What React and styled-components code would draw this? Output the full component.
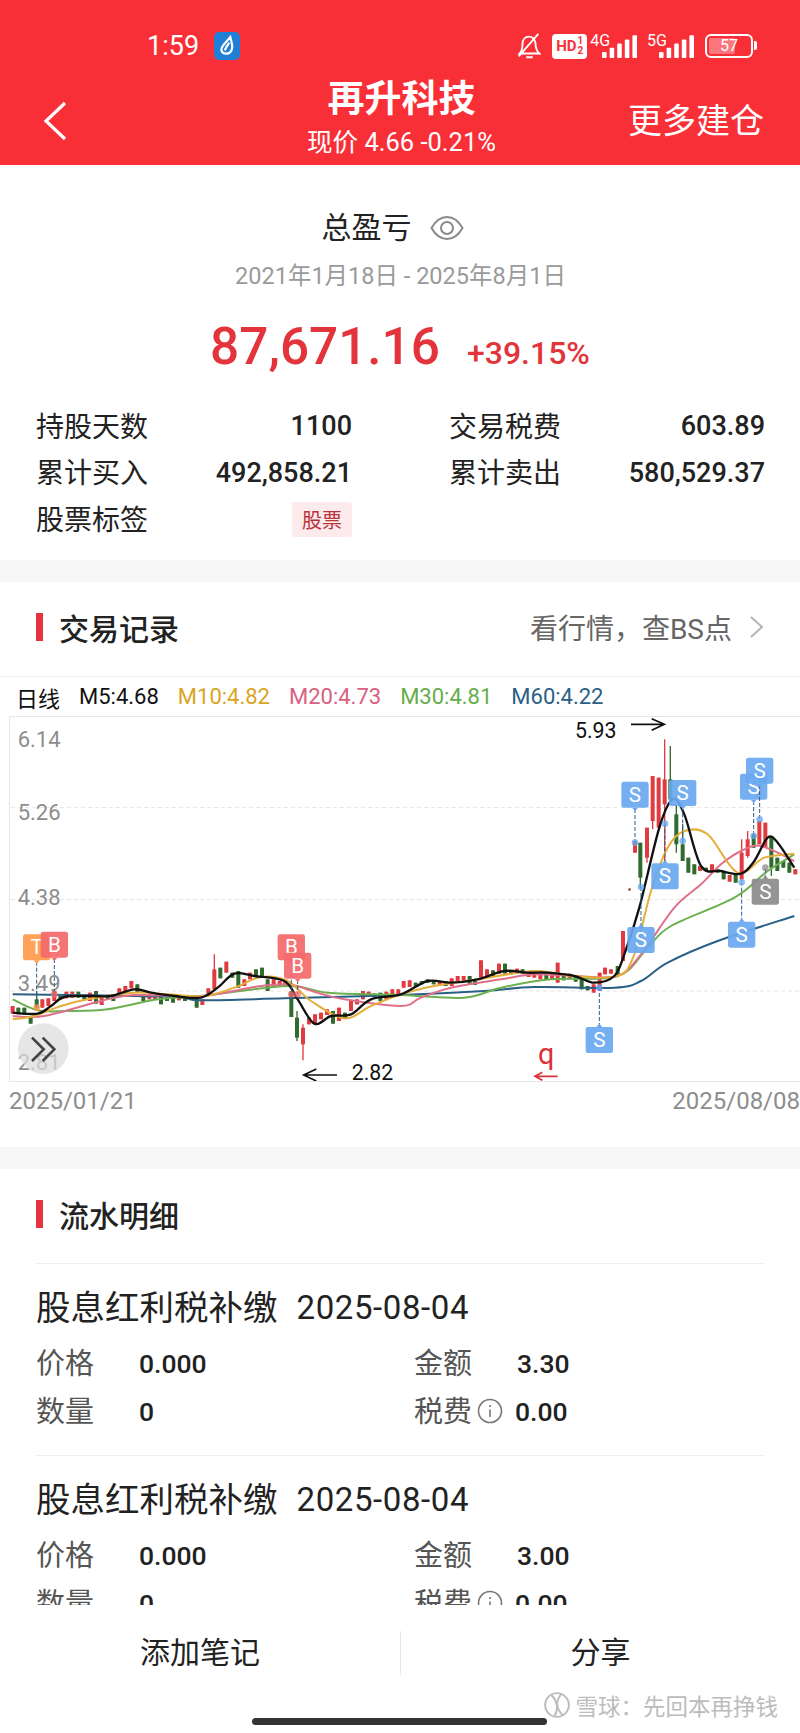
import styled, { createGlobalStyle } from 'styled-components';

const GlobalStyle = createGlobalStyle`
    * { box-sizing: border-box; }
    html, body { margin: 0; padding: 0; background: #fff; }
    body { font-family: Roboto, "Noto Sans CJK SC", sans-serif; }
`;

const R = '#e23b3f';
const G = '#2f6b2c';

// chart values are read in units of 1/3 px, right half shifted by 1200
const leftCandles = [
    [35, 1005, 1028, R], [52, 1010, 1030, G], [70, 1010, 1030, G], [89, 1040, 1058, G], [107, 960, 1018, G, 985, 1010],
    [124, 985, 1010, R], [142, 982, 1005, R], [160, 960, 990, R], [178, 975, 985, G], [196, 962, 982, R], [214, 962, 980, R],
    [232, 962, 980, G], [250, 972, 985, G], [267, 965, 990, R], [285, 960, 998, G], [302, 980, 1002, R], [320, 975, 985, G],
    [337, 970, 990, G], [355, 952, 975, R], [373, 945, 965, R], [391, 930, 952, R], [409, 940, 965, G], [427, 970, 990, G],
    [445, 970, 985, R], [462, 972, 985, R], [480, 975, 1000, G], [498, 980, 990, G], [516, 980, 995, G], [534, 978, 988, R],
    [552, 978, 990, G], [587, 980, 1010, G], [604, 985, 1002, R], [622, 952, 970, R], [640, 850, 955, R, 895, 955],
    [658, 890, 922, G], [676, 872, 905, R], [694, 905, 920, G], [712, 900, 950, G], [730, 925, 945, R], [747, 905, 925, R],
    [765, 895, 915, G], [783, 890, 920, G], [800, 925, 960, G], [818, 925, 945, R], [836, 930, 945, R], [853, 930, 945, R],
    [871, 960, 1038, G], [888, 1020, 1110, G, 1040, 1100], [906, 1060, 1168, R, 1070, 1120], [924, 1040, 1060, R],
    [942, 1030, 1058, R], [960, 1025, 1045, R], [978, 1015, 1032, R], [996, 1020, 1058, G], [1014, 1010, 1050, R],
    [1032, 1025, 1042, G], [1050, 990, 1020, R], [1068, 985, 1000, R], [1086, 960, 985, R], [1103, 962, 975, R],
    [1121, 968, 980, G], [1138, 965, 990, G], [1156, 962, 985, R], [1174, 955, 975, R], [1192, 955, 970, R],
];

const rightCandles = [
    [8, 930, 950, R], [26, 928, 948, R], [44, 935, 945, G], [62, 930, 940, G], [80, 925, 935, G], [98, 930, 940, G],
    [116, 930, 945, R], [134, 930, 945, G], [152, 922, 945, R], [170, 915, 930, R], [188, 915, 930, R], [206, 915, 940, G],
    [222, 930, 942, G], [240, 868, 920, R], [258, 895, 915, R], [276, 898, 915, G], [294, 878, 908, R], [312, 878, 908, G],
    [330, 898, 910, G], [348, 893, 908, R], [365, 895, 908, G], [383, 900, 918, R], [400, 905, 920, R], [418, 912, 925, R],
    [436, 905, 925, G], [453, 905, 925, R], [470, 875, 935, R], [488, 908, 928, G], [506, 908, 925, R], [524, 915, 932, G],
    [542, 922, 955, G], [560, 945, 958, G], [578, 940, 965, R], [596, 905, 960, R], [612, 890, 910, R], [630, 895, 908, R],
    [650, 885, 915, G], [666, 780, 870, R], [702, 510, 545, R], [718, 515, 650, G, 515, 620], [738, 470, 575, R, 470, 560],
    [755, 315, 475, R, 315, 450], [773, 320, 470, R], [791, 205, 570, R, 325, 400], [808, 225, 400, G, 325, 385],
    [826, 400, 545, G, 430, 520], [845, 460, 570, G, 520, 570], [862, 560, 605, G], [880, 580, 610, G], [897, 585, 600, R],
    [915, 590, 600, G], [933, 580, 605, R], [950, 595, 605, G], [968, 600, 625, G], [986, 612, 632, R], [1004, 610, 635, G],
    [1022, 505, 630, R, 545, 625], [1040, 480, 560, R, 505, 555], [1058, 490, 530, G], [1075, 450, 520, R], [1093, 455, 530, R],
    [1111, 495, 615, G, 495, 590], [1129, 560, 600, G], [1147, 570, 590, G], [1165, 575, 605, G], [1183, 595, 610, R],
];

const candles = [...leftCandles, ...rightCandles.map(c => [c[0] + 1200, ...c.slice(1)])];

const shift = pts => pts.map(([x, y]) => [x + 1200, y]);

const lines = [
    {
        color: '#2a5f86',
        pts: [[35, 970], [200, 972], [520, 978], [600, 988], [850, 982], [1200, 972],
            ...shift([[250, 960], [400, 948], [640, 950], [720, 930], [800, 875], [950, 810], [1180, 735]])],
    },
    {
        color: '#6cb04f',
        pts: [[35, 985], [110, 1018], [200, 1020], [320, 1015], [470, 985], [600, 975], [860, 945], [980, 965], [1200, 972],
            ...shift([[190, 980], [300, 950], [450, 925], [650, 915], [740, 830], [810, 765], [1000, 680], [1100, 600], [1180, 550]])],
    },
    {
        color: '#e0708a',
        pts: [[35, 1035], [130, 1035], [300, 990], [400, 972], [600, 975], [760, 948], [860, 940], [950, 965], [1030, 985], [1200, 1005],
            ...shift([[60, 980], [150, 950], [300, 925], [400, 910], [520, 915], [650, 915], [720, 850], [820, 710], [900, 640], [960, 580], [1020, 540], [1080, 525], [1180, 570]])],
    },
    {
        color: '#e5ad3a',
        pts: [[35, 1045], [100, 1035], [180, 1005], [260, 985], [400, 965], [500, 970], [610, 975], [700, 950], [780, 918], [860, 930], [930, 990], [1030, 1042], [1110, 1005], [1200, 970],
            ...shift([[100, 945], [230, 925], [400, 900], [520, 915], [650, 915], [700, 850], [750, 660], [800, 530], [850, 480], [920, 490], [1010, 605], [1090, 560], [1180, 548]])],
    },
    {
        color: '#111',
        pts: [[35, 1025], [110, 1028], [150, 1005], [190, 978], [270, 975], [330, 975], [400, 955], [450, 965], [520, 975], [600, 980], [650, 950], [700, 908], [760, 915], [850, 930], [890, 985], [940, 1058], [990, 1035], [1050, 1030], [1110, 985], [1200, 970],
            ...shift([[80, 930], [150, 935], [230, 925], [310, 900], [380, 905], [440, 905], [520, 915], [580, 935], [640, 915], [670, 850], [715, 710], [775, 470], [815, 385], [850, 430], [900, 585], [960, 600], [1020, 608], [1060, 570], [1100, 500], [1130, 515], [1180, 590]])],
    },
];

// marker: letter, centre x, box top, where its dashed stem ends, colour
const markers = [
    ['T', 107, 790, 1010, '#ff9a4a'],
    ['B', 160, 782, 970, '#f4696b'],
    ['B', 871, 790, 970, '#f4696b'],
    ['B', 890, 845, 970, '#f4696b'],
    ['S', 1902, 332, 515, '#69a8f0'],
    ['S', 2045, 327, 510, '#69a8f0'],
    ['S', 1992, 577, 458, '#69a8f0'],
    ['S', 1920, 768, 648, '#69a8f0'],
    ['S', 1795, 1068, 950, '#69a8f0'],
    ['S', 2222, 752, 634, '#69a8f0'],
    ['S', 2258, 308, 495, '#69a8f0'],
    ['S', 2276, 260, 445, '#69a8f0'],
    ['S', 2293, 623, 590, '#8b8b8b'],
];

// catmull-rom through the points
const smooth = pts => {
    let d = `M${pts[0][0]} ${pts[0][1]}`;
    for (let i = 0; i < pts.length - 1; i++) {
        const p0 = pts[i - 1] || pts[i];
        const p1 = pts[i];
        const p2 = pts[i + 1];
        const p3 = pts[i + 2] || p2;
        const c1x = p1[0] + (p2[0] - p0[0]) / 6;
        const c1y = p1[1] + (p2[1] - p0[1]) / 6;
        const c2x = p2[0] - (p3[0] - p1[0]) / 6;
        const c2y = p2[1] - (p3[1] - p1[1]) / 6;
        d += ` C${c1x} ${c1y} ${c2x} ${c2y} ${p2[0]} ${p2[1]}`;
    }
    return d;
};

function KChart() {
    return (
        <svg width="791" height="365" viewBox="27 138 2373 1095" style={{ display: 'block' }}>
            {[410, 686, 960].map(y => (
                <line key={y} x1="30" x2="2400" y1={y} y2={y} stroke="#e4e4e4" strokeWidth="3" strokeDasharray="12 9" />
            ))}
            <g fontFamily="Roboto, sans-serif" fontSize="66" fill="#8d8d8d">
                <text x="50" y="229">6.14</text>
                <text x="50" y="448">5.26</text>
                <text x="50" y="703">4.38</text>
                <text x="50" y="961">3.49</text>
                <text x="50" y="1198">2.81</text>
            </g>
            {candles.map(([x, top, bottom, color, bodyTop = top, bodyBottom = bottom], i) => (
                <g key={i}>
                    <line x1={x} x2={x} y1={top} y2={bottom} stroke={color} strokeWidth="4" />
                    <rect x={x - 6} y={bodyTop} width="12" height={bodyBottom - bodyTop} fill={color} />
                </g>
            ))}
            <rect x="1882" y="652" width="7" height="7" fill="#a52a3a" />
            {lines.map(l => (
                <path key={l.color} d={smooth(l.pts)} fill="none" stroke={l.color} strokeWidth={l.color === '#111' ? 7 : 6} />
            ))}
            {markers.map(([letter, x, top, end, color], i) => {
                const below = end > top;
                const stemFrom = below ? top + 82 : top;
                return (
                    <g key={i}>
                        <line x1={x} x2={x} y1={stemFrom} y2={end} stroke="#2a5f86" strokeWidth="3" strokeDasharray="12 6" />
                        <circle cx={x} cy={end} r="10" fill={color} opacity=".75" />
                        <rect x={x - 41} y={top} width="82" height="78" rx="7" fill={color} opacity=".92" />
                        <path d={below ? `M${x - 9} ${top + 78} L${x} ${top + 88} L${x + 9} ${top + 78}Z` : `M${x - 9} ${top} L${x} ${top - 10} L${x + 9} ${top}Z`} fill={color} />
                        <text x={x} y={top + 60} textAnchor="middle" fontFamily="Roboto, sans-serif" fontSize="62" fill="#fff">{letter}</text>
                    </g>
                );
            })}
            <g fontFamily="Roboto, sans-serif" fontSize="64" fill="#111">
                <text x="1722" y="202">5.93</text>
                <text x="1052" y="1227">2.82</text>
            </g>
            <path d="M1890 160H1990M1952 143L1990 160L1952 178" fill="none" stroke="#111" strokeWidth="5" />
            <path d="M1008 1212H908M946 1194L908 1212L946 1230" fill="none" stroke="#111" strokeWidth="5" />
            <text x="1611" y="1178" fontFamily="Roboto, sans-serif" fontSize="86" fill="#d8343a">q</text>
            <path d="M1670 1216H1602M1624 1204L1602 1216L1624 1228" fill="none" stroke="#d8343a" strokeWidth="5" />
            <circle cx="127" cy="1133" r="76" fill="#dcdcdc" opacity=".72" />
            <path d="M93 1100L128 1135L93 1170M125 1100L160 1135L125 1170" fill="none" stroke="#444" strokeWidth="8" />
        </svg>
    );
}

function Signal() {
    return (
        <svg width="36" height="23" viewBox="0 0 36 23">
            {[0, 1, 2, 3, 4].map(i => (
                <rect key={i} x={i * 7.6} y={17 - i * 4.2} width="4.6" height={6 + i * 4.2} rx="1" fill="#fff" />
            ))}
        </svg>
    );
}

const flows = [
    { title: '股息红利税补缴', date: '2025-08-04', price: '0.000', amount: '3.30', qty: '0', tax: '0.00' },
    { title: '股息红利税补缴', date: '2025-08-04', price: '0.000', amount: '3.00', qty: '0', tax: '0.00' },
];

export default function App() {
    return (
        <Page>
            <GlobalStyle />
            <Header>
                <StatusBar>
                    <Clock>1:59</Clock>
                    <AppBadge>
                        <svg width="20" height="22" viewBox="0 0 18 20">
                            <path d="M12 2C13 7 15 10 13 14C11 18 5 18 4 14C3 10 9 6 12 2ZM7 14C8 11 10 9 11 7" fill="none" stroke="#fff" strokeWidth="2" />
                        </svg>
                    </AppBadge>
                    <StatusIcons>
                        <svg width="28" height="28" viewBox="0 0 28 30" fill="none" stroke="#fff" strokeWidth="2">
                            <path d="M4 23C7 20 7 17 7 13C7 8 10 5 14 5C18 5 20 8 21 12C21 17 22 20 25 23Z" />
                            <path d="M11 27H18M3 26L24 2" />
                        </svg>
                        <HdChip>
                            HD
                            <HdFraction><span>1</span><span>2</span></HdFraction>
                        </HdChip>
                        <NetGroup><NetLabel>4G</NetLabel><Signal /></NetGroup>
                        <NetGroup><NetLabel>5G</NetLabel><Signal /></NetGroup>
                        <Battery><BatteryFill /><BatteryText>57</BatteryText></Battery>
                    </StatusIcons>
                </StatusBar>
                <NavRow>
                    <BackIcon width="26" height="40" viewBox="0 0 26 40" fill="none" stroke="#fff" strokeWidth="3.2">
                        <path d="M23 2L4 20L23 38" />
                    </BackIcon>
                    <TitleBlock>
                        <Title>再升科技</Title>
                        <Subtitle>现价 4.66 -0.21%</Subtitle>
                    </TitleBlock>
                    <NavAction>更多建仓</NavAction>
                </NavRow>
            </Header>
            <Scroll>
                <Summary>
                    <SummaryHead>
                        总盈亏
                        <svg width="34" height="26" viewBox="0 0 34 26" fill="none" stroke="#8a8a8a" strokeWidth="2">
                            <path d="M1.5 13C6 5 11 2 17 2C23 2 28 5 32.5 13C28 21 23 24 17 24C11 24 6 21 1.5 13Z" />
                            <circle cx="17" cy="13" r="6" />
                        </svg>
                    </SummaryHead>
                    <DateRange>2021年1月18日 - 2025年8月1日</DateRange>
                    <Profit>
                        <ProfitValue>87,671.16</ProfitValue>
                        <ProfitRate>+39.15%</ProfitRate>
                    </Profit>
                    <StatGrid>
                        <Stat><StatLabel>持股天数</StatLabel><StatValue>1100</StatValue></Stat>
                        <Stat><StatLabel>交易税费</StatLabel><StatValue>603.89</StatValue></Stat>
                        <Stat><StatLabel>累计买入</StatLabel><StatValue>492,858.21</StatValue></Stat>
                        <Stat><StatLabel>累计卖出</StatLabel><StatValue>580,529.37</StatValue></Stat>
                        <Stat><StatLabel>股票标签</StatLabel><Tag>股票</Tag></Stat>
                    </StatGrid>
                </Summary>
                <Band />
                <SectionHead $border>
                    <SectionTitle>交易记录</SectionTitle>
                    <SectionLink>
                        看行情，查BS点
                        <svg width="15" height="24" viewBox="0 0 15 24" fill="none" stroke="#b5b5b5" strokeWidth="2">
                            <path d="M2 2L13 12L2 22" />
                        </svg>
                    </SectionLink>
                </SectionHead>
                <Legend>
                    <LegendItem $color="#111">日线</LegendItem>
                    <LegendItem $color="#111">M5:4.68</LegendItem>
                    <LegendItem $color="#d9a520">M10:4.82</LegendItem>
                    <LegendItem $color="#d9607f">M20:4.73</LegendItem>
                    <LegendItem $color="#66ad4a">M30:4.81</LegendItem>
                    <LegendItem $color="#2a5f86">M60:4.22</LegendItem>
                </Legend>
                <ChartBox><KChart /></ChartBox>
                <AxisDates>
                    <span>2025/01/21</span>
                    <span>2025/08/08</span>
                </AxisDates>
                <Band />
                <SectionHead>
                    <SectionTitle>流水明细</SectionTitle>
                </SectionHead>
                <FlowList>
                    {flows.map((f, i) => (
                        <FlowItem key={i}>
                            <FlowTitle>{f.title}<FlowDate>{f.date}</FlowDate></FlowTitle>
                            <FlowGrid>
                                <FlowCell><FlowLabel>价格</FlowLabel><FlowValue>{f.price}</FlowValue></FlowCell>
                                <FlowCell><FlowLabel>金额</FlowLabel><FlowValue>{f.amount}</FlowValue></FlowCell>
                                <FlowCell><FlowLabel>数量</FlowLabel><FlowValue>{f.qty}</FlowValue></FlowCell>
                                <FlowCell>
                                    <FlowLabel>税费</FlowLabel>
                                    <InfoIcon width="26" height="26" viewBox="0 0 26 26" fill="none" stroke="#777" strokeWidth="1.6">
                                        <circle cx="13" cy="13" r="11.5" />
                                        <path d="M13 11.5V19M13 7V9" />
                                    </InfoIcon>
                                    <FlowValue $tight>{f.tax}</FlowValue>
                                </FlowCell>
                            </FlowGrid>
                        </FlowItem>
                    ))}
                </FlowList>
            </Scroll>
            <BottomBar>
                <Actions>
                    <ActionButton>添加笔记</ActionButton>
                    <ActionButton $divided>分享</ActionButton>
                </Actions>
                <HomeIndicator />
            </BottomBar>
            <Watermark>
                <svg width="28" height="28" viewBox="0 0 26 26" fill="none" stroke="#bcbcbc" strokeWidth="1.8">
                    <circle cx="13" cy="13" r="11" />
                    <path d="M8 4C13 9 15 15 11 23M17 3C12 9 12 16 18 22" />
                </svg>
                雪球：先回本再挣钱
            </Watermark>
        </Page>
    );
}

const Page = styled.div`
    position: relative;
    width: 800px;
    height: 1733px;
    overflow: hidden;
    display: flex;
    flex-direction: column;
    background: #fff;
`;

const Header = styled.header`
    height: 165px;
    flex-shrink: 0;
    background: #f92f38;
    color: #fff;
    padding-top: 27px;
    display: flex;
    flex-direction: column;
`;

const StatusBar = styled.div`
    height: 38px;
    display: flex;
    align-items: center;
    padding: 0 42px 0 147px;
`;

const Clock = styled.span`
    font-size: 27px;
    width: 67px;
`;

const AppBadge = styled.span`
    width: 26px;
    height: 28px;
    border-radius: 5px;
    background: #1f7fd6;
    display: flex;
    align-items: center;
    justify-content: center;
`;

const StatusIcons = styled.div`
    margin-left: auto;
    display: flex;
    align-items: center;
    gap: 9px;
`;

const HdChip = styled.span`
    background: #fff;
    color: #f92f38;
    font-size: 15px;
    font-weight: 700;
    border-radius: 4px;
    height: 25px;
    width: 35px;
    margin-right: -6px;
    display: flex;
    align-items: center;
    justify-content: center;
    gap: 1px;
`;

const HdFraction = styled.span`
    display: flex;
    flex-direction: column;
    font-size: 10px;
    line-height: 10px;
`;

const NetGroup = styled.span`
    display: flex;
    align-items: flex-end;
    height: 24px;
`;

const NetLabel = styled.span`
    font-size: 16px;
    line-height: 14px;
    align-self: flex-start;
    margin-right: -8px;
`;

const Battery = styled.span`
    position: relative;
    width: 48px;
    height: 24px;
    border: 2px solid #fff;
    border-radius: 6px;
    font-size: 16px;
    margin: 0 5px 0 1px;

    &::after {
        content: '';
        position: absolute;
        right: -6px;
        top: 5px;
        width: 3px;
        height: 9px;
        border-radius: 0 2px 2px 0;
        background: #fff;
    }
`;

const BatteryFill = styled.span`
    position: absolute;
    left: 2px;
    top: 2px;
    bottom: 2px;
    width: 58%;
    border-radius: 2px;
    background: rgba(255, 255, 255, .35);
`;

const BatteryText = styled.span`
    position: relative;
    display: block;
    text-align: center;
    line-height: 20px;
`;

const NavRow = styled.div`
    flex: 1;
    display: grid;
    grid-template-columns: 1fr auto 1fr;
    align-items: center;
    padding: 0 36px 0 42px;
`;

const BackIcon = styled.svg`
    justify-self: start;
    margin-top: 11px;
`;

const TitleBlock = styled.div`
    display: flex;
    flex-direction: column;
    align-items: center;
    padding: 6px 3px 0 0;
`;

const Title = styled.div`
    font-size: 37px;
    font-weight: 700;
    line-height: 48px;
`;

const Subtitle = styled.div`
    font-size: 25.5px;
    line-height: 36px;
`;

const NavAction = styled.div`
    justify-self: end;
    font-size: 34px;
    line-height: 44px;
    margin-top: 12px;
`;

const Scroll = styled.main`
    flex: 1;
    min-height: 0;
    overflow: hidden;
`;

const Summary = styled.section`
    height: 395px;
    padding: 42px 36px 0;
    display: flex;
    flex-direction: column;
    align-items: center;
`;

const SummaryHead = styled.div`
    display: flex;
    align-items: center;
    gap: 18px;
    font-size: 30px;
    line-height: 42px;
    color: #222;
    margin-right: 15px;
`;

const DateRange = styled.div`
    margin-top: 12px;
    font-size: 23.5px;
    line-height: 30px;
    color: #9a9a9a;
    margin-right: -1px;
`;

const Profit = styled.div`
    margin-top: 23px;
    display: flex;
    align-items: baseline;
    gap: 27px;
    color: #e2343a;
`;

const ProfitValue = styled.span`
    font-size: 51.3px;
    font-weight: 500;
    line-height: 66px;
`;

const ProfitRate = styled.span`
    font-size: 32px;
    font-weight: 500;
`;

const StatGrid = styled.div`
    width: 100%;
    margin-top: 23px;
    display: grid;
    grid-template-columns: 316px 316px;
    column-gap: 97px;
    grid-auto-rows: 46.5px;
`;

const Stat = styled.div`
    display: flex;
    justify-content: space-between;
    align-items: center;
`;

const StatLabel = styled.span`
    font-size: 28px;
    color: #222;
    margin-top: -3px;
`;

const StatValue = styled.span`
    font-size: 27px;
    font-weight: 500;
    color: #222;
`;

const Tag = styled.span`
    width: 60px;
    height: 35px;
    border-radius: 3px;
    background: #fdeaec;
    color: #b9343a;
    font-size: 20px;
    display: flex;
    align-items: center;
    justify-content: center;
`;

const Band = styled.div`
    height: 22px;
    background: #f7f7f7;
`;

const SectionHead = styled.div`
    height: 95px;
    margin: 0 ${props => props.$border ? '0' : '36px'};
    padding: 0 ${props => props.$border ? '36px' : '0'} 4px;
    display: flex;
    align-items: center;
    justify-content: space-between;
    border-bottom: 1px solid #eee;
`;

const SectionTitle = styled.h2`
    margin: 0;
    font-size: 30px;
    font-weight: 500;
    color: #222;
    display: flex;
    align-items: center;
    gap: 16px;

    &::before {
        content: '';
        width: 7px;
        height: 28px;
        background: #e5343e;
    }
`;

const SectionLink = styled.span`
    display: flex;
    align-items: center;
    gap: 17px;
    font-size: 28px;
    color: #666;
`;

const Legend = styled.div`
    height: 39px;
    padding-left: 16px;
    display: flex;
    align-items: center;
    gap: 19px;
`;

const LegendItem = styled.span`
    font-size: 22px;
    color: ${props => props.$color};
`;

const ChartBox = styled.div`
    margin-left: 9px;
    height: 366px;
    border: solid #e6e6e6;
    border-width: 1px 0 1px 1px;
    overflow: hidden;
`;

const AxisDates = styled.div`
    height: 65px;
    padding: 2px 0 0 9px;
    display: flex;
    justify-content: space-between;
    font-size: 24px;
    line-height: 34px;
    color: #8d8d8d;
`;

const FlowList = styled.div`
    padding: 0 36px;
`;

const FlowItem = styled.div`
    height: 192px;
    padding-top: 22px;
    border-bottom: 1px solid #eee;
`;

const FlowTitle = styled.div`
    font-size: 34.5px;
    line-height: 44px;
    color: #222;
    display: flex;
    align-items: center;
    gap: 19px;
`;

const FlowDate = styled.span`
    font-size: 33px;
    letter-spacing: .6px;
`;

const FlowGrid = styled.div`
    margin-top: 9px;
    display: grid;
    grid-template-columns: 378px 1fr;
    grid-auto-rows: 48px;
`;

const FlowCell = styled.div`
    display: flex;
    align-items: center;
`;

const FlowLabel = styled.span`
    width: 59px;
    font-size: 29px;
    color: #555;
    margin-top: -4px;
`;

const InfoIcon = styled.svg`
    margin-left: 4px;
`;

const FlowValue = styled.span`
    margin-left: ${props => props.$tight ? '12px' : '44px'};
    font-size: 26.5px;
    font-weight: 500;
    color: #222;
`;

const BottomBar = styled.footer`
    height: 128px;
    flex-shrink: 0;
    background: #fff;
    display: flex;
    flex-direction: column;
`;

const Actions = styled.div`
    margin-top: 26px;
    height: 44px;
    display: grid;
    grid-template-columns: 400px 400px;
`;

const ActionButton = styled.div`
    font-size: 30px;
    line-height: 44px;
    text-align: center;
    color: #222;
    border-left: ${props => props.$divided ? '1px solid #e8e8e8' : 'none'};
`;

const HomeIndicator = styled.div`
    width: 295px;
    height: 7px;
    margin: 43px 0 0 252px;
    border-radius: 4px;
    background: #333;
`;

const Watermark = styled.div`
    position: absolute;
    right: 22px;
    top: 1689px;
    display: flex;
    align-items: center;
    gap: 4px;
    font-size: 22.5px;
    color: #bcbcbc;
`;
